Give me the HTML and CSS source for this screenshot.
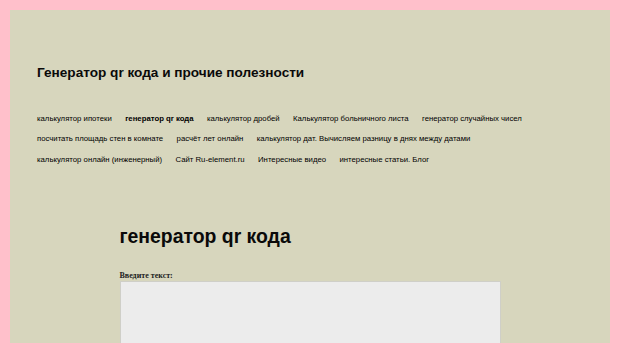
FILE: index.html
```html
<!DOCTYPE html>
<html lang="ru">
<head>
<meta charset="utf-8">
<title>генератор qr кода</title>
<link rel="stylesheet" href="styles.css">
</head>
<body>
<div class="page">
  <header class="site-header">
    <p class="site-title">Генератор qr кода и прочие полезности</p>
    <nav class="menu">
      <a href="#">калькулятор ипотеки</a>
      <a href="#" class="current">генератор qr кода</a>
      <a href="#">калькулятор дробей</a>
      <a href="#">Калькулятор больничного листа</a>
      <a href="#">генератор случайных чисел</a>
      <a href="#">посчитать площадь стен в комнате</a>
      <a href="#">расчёт лет онлайн</a>
      <a href="#">калькулятор дат. Вычисляем разницу в днях между датами</a>
      <a href="#">калькулятор онлайн (инженерный)</a>
      <a href="#">Сайт Ru-element.ru</a>
      <a href="#">Интересные видео</a>
      <a href="#">интересные статьи. Блог</a>
    </nav>
  </header>
  <main class="content">
    <h1 class="entry-title">генератор qr кода</h1>
    <label class="field-label" for="qrtext">Введите текст:</label>
    <textarea id="qrtext" class="field"></textarea>
  </main>
</div>
</body>
</html>
```

FILE: styles.css
```css
html, body {
  margin: 0;
  padding: 0;
}
body {
  background: #ffc0cb;
  padding: 10px 10px 0 10px;
  font-family: "Liberation Sans", Arial, sans-serif;
  color: #111;
  overflow: hidden;
  height: 343px;
  box-sizing: border-box;
}
.page {
  background: #d7d6bd;
  height: 333px;
  padding: 0 27px;
  overflow: hidden;
}
.site-header {
  padding-top: 54px;
}
.site-title {
  margin: 0;
  font-size: 13.6px;
  font-weight: bold;
  line-height: 18px;
  color: #0a0a0a;
}
.menu {
  margin-top: 27px;
  display: flex;
  flex-wrap: wrap;
  column-gap: 13.4px;
  row-gap: 0;
}
.menu a {
  font-size: 7.75px;
  line-height: 20.3px;
  color: #000;
  text-decoration: none;
}
.menu a.current {
  font-weight: bold;
}
.content {
  width: 381px;
  margin: 54px auto 0;
}
.entry-title {
  margin: 0;
  font-size: 19.4px;
  line-height: 24px;
  font-weight: bold;
  color: #0a0a0a;
}
.field-label {
  display: block;
  margin-top: 23px;
  font-family: "Liberation Serif", "Times New Roman", serif;
  font-weight: bold;
  font-size: 8px;
  line-height: 10px;
  color: #222;
}
.field {
  display: block;
  box-sizing: border-box;
  width: 381px;
  height: 80px;
  margin: 0;
  background: #ececec;
  border: 1px solid #cfcfc8;
  resize: none;
}
```
